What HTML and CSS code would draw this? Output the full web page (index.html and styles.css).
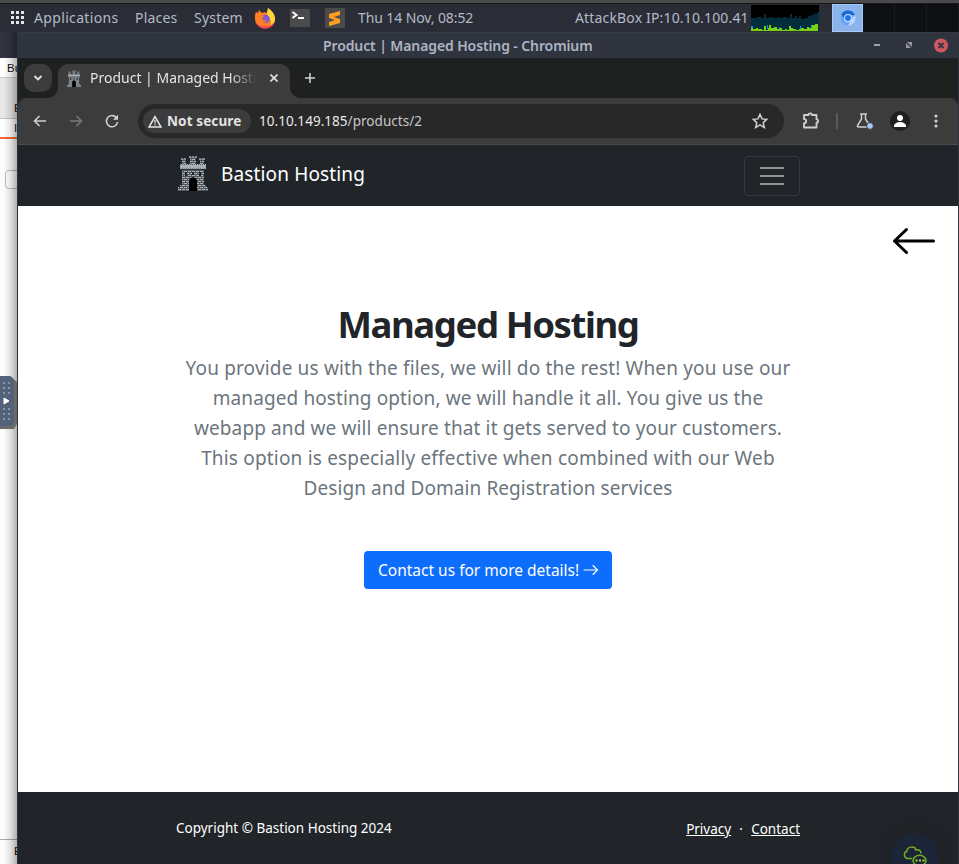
FILE: index.html
```html
<!DOCTYPE html>
<html lang="en">
<head>
<meta charset="utf-8">
<title>Product | Managed Hosting</title>
<link rel="stylesheet" href="styles.css">
</head>
<body>
<svg class="defs" width="0" height="0">
  <defs>
    <pattern id="brick" width="4" height="4" patternUnits="userSpaceOnUse">
      <rect width="4" height="4" fill="#a9b3b8"/>
      <path d="M0 3.5h4M0 1.5h4M1.5 0v1.5M3.5 1.5v2" stroke="#343b41" stroke-width=".75"/>
    </pattern>
    <symbol id="castle" viewBox="0 0 30 36">
      <path d="M3 3h2v1h1V3h2v2H3zM11 1h2v1h1V1h2v1h1V1h2v2h-8zM21 3h2v1h1V3h3v2h-6z" fill="#858b90"/>
      <path d="M4 5h4v5H4zM12 3h6v7h-6zM22 5h4v5h-4z" fill="url(#brick)"/>
      <path d="M2 9h26v5H2z" fill="#a7b0b6"/>
      <path d="M2 9.5h26M2 14h26" stroke="#515960" stroke-dasharray="1 1"/>
      <path d="M4 15h22v15H4z" fill="url(#brick)"/>
      <path d="M2 30h26v2H2zM0 32h30v4H0z" fill="url(#brick)"/>
      <path d="M11 36V26c0-5 8-5 8 0v10z" fill="#000"/>
      <path d="M7 17h2v4H7zM14 17h2v3h-2zM21 17h2v4h-2z" fill="#1d2126"/>
    </symbol>
  </defs>
</svg>
<div class="desktop">
  <header class="panel">
    <svg class="grid-icon" width="14" height="14" viewBox="0 0 14 14" fill="#e3e5e9"><path d="M0 0h3v3H0zM5 0h3v3H5zM10 0h3v3h-3zM0 5h3v3H0zM5 5h3v3H5zM10 5h3v3h-3zM0 10h3v3H0zM5 10h3v3H5zM10 10h3v3h-3z"/></svg>
    <span class="menu m-apps">Applications</span>
    <span class="menu m-places">Places</span>
    <span class="menu m-system">System</span>
    <svg class="launch" width="20" height="22" viewBox="0 0 20 22">
      <path d="M1 5l2 1 1-3 3 3c2-1 4-1 5 0l1-5c3 2 7 6 7 11a10 9.500 0 0 1-20 0c0-3 0-5 1-7z" fill="#ff8125"/>
      <path d="M12 6l1-5c4 3 7 6 7 11 0 3-2 7-5 8 2-5 1-8-2-10z" fill="#ffd43b"/>
      <path d="M1 14c1 5 5 7.500 9 7.500s8-2 9.500-7c-3 4-5 5-9 5S3 18 1 14z" fill="#ff3d59"/>
      <circle cx="10.500" cy="12" r="4.300" fill="#8058cf"/>
      <path d="M4 8l5 1-2 3c2 2 3 1 5 2-2 3-7 2-8-2z" fill="#ff7a22"/>
    </svg>
    <svg class="tile t-term" width="20" height="18" viewBox="0 0 20 18"><rect width="20" height="18" rx="1" fill="#4b4b4b"/><path d="M2.500 3l4 3-4 3" fill="none" stroke="#fff" stroke-width="2"/><path d="M8 9h6" stroke="#fff" stroke-width="2"/></svg>
    <svg class="tile t-subl" width="20" height="20" viewBox="0 0 20 20"><rect width="20" height="20" fill="#4b4b4b"/><path d="M4 6l11-3v4l-6 2 6 2v4L4 18v-4l6-2-6-2z" fill="#ff9c21"/></svg>
    <span class="menu m-date">Thu 14 Nov, 08:52</span>
    <span class="menu m-ip">AttackBox IP:10.10.100.41</span>
    <svg class="graph" width="68" height="26" viewBox="0 0 68 26" shape-rendering="crispEdges">
      <rect width="68" height="26" fill="#000"/>
      <path fill="#032d3b" d="M0 26V13h6v-1h4v1h3V9h2v4h3v-1h4v1h5v-1h2v1h3v-1h3v1h4V9h2v4h3v-2h2v2h2v-2h2v3h4v-1h3v-2h2v1h1v-2h3V8h1v1h2V7h2v1h2v18z"/>
      <path fill="#0499e5" d="M0 24v-3h2v3zM16 24v-4h1v4zM28 24v-2h1v2zM49 24v-3h1v3zM60 23v-3h2v3zM66 21v-2h1v2z"/>
      <path fill="#79cf12" d="M0 26v-3h2v1h3v-1h2v1h4v1h2v-4h2v4h2v-2h1v-3h2v3h3v-1h3v2h3v-1h2v2h3v-1h2v1h2v-4h2v2h2v1h3v1h3v-1h2v-1h3v1h3v-2h2v1h3v-3h3v-1h3v7z"/>
    </svg>
    <div class="task">
      <svg width="16" height="16" viewBox="0 0 16 16"><circle cx="8" cy="8" r="7.700" fill="#6aa4f7"/><path d="M1.300 4.200A7.700 7.700 0 0 1 15 5H8L5 10z" fill="#1967d2"/><path d="M15 5A7.700 7.700 0 0 1 8 15.700L11.500 9z" fill="#bcd5fc"/><circle cx="8" cy="8" r="3.900" fill="#d8e7ff"/><circle cx="8" cy="8" r="2.900" fill="#1a73e8"/></svg>
    </div>
    <div class="workspaces"><i></i><i></i><i></i></div>
  </header>
  <div class="stage">
    <aside class="behind">
      <div class="b-title"></div>
      <div class="b-menu">Bu</div>
      <div class="b-tabs"><span>E</span></div>
      <div class="b-sub"><span>I</span></div>
      <div class="b-body"><div class="b-field"></div></div>
      <div class="b-foot"><span>E</span></div>
      <div class="b-shadow"></div>
      <div class="handle"><svg width="17" height="54" viewBox="0 0 17 54"><path d="M0 0h10l7 6v42l-3 5H0z" fill="#6c6b6b"/><path d="M0 0h9q5 1 5 6v39q0 4-4 5H0z" fill="#536179"/><path d="M4 6v12M9 6v12M4 32v12M9 32v12" stroke="#8795aa" stroke-width="2" stroke-dasharray="2 3"/><path d="M4 22l5 3-5 3z" fill="#fff" stroke="#fff"/></svg></div>
    </aside>
    <div class="window">
      <div class="titlebar">
        <span class="w-title">Product | Managed Hosting - Chromium</span>
        <svg class="w-ctl" width="76" height="16" viewBox="0 0 76 16"><path d="M1 7h6" stroke="#9ea2aa" stroke-width="2"/><path d="M34 4h5v5zM33 5v5h5z" fill="#9598a0"/><circle cx="68" cy="7.500" r="7" fill="#cf5760"/><path d="M65.500 5l5 5M70.500 5l-5 5" stroke="#30343f" stroke-width="2"/></svg>
      </div>
      <div class="tabstrip">
        <div class="tab-search"><svg width="10" height="8" viewBox="0 0 10 8"><path d="M1.500 2L5 5.500 8.500 2" fill="none" stroke="#e3e3e3" stroke-width="1.800"/></svg></div>
        <div class="tab">
          <svg class="fav" width="14" height="17"><use href="#castle"/></svg>
          <span class="tab-title">Product | Managed Hosting</span>
          <svg width="8" height="8" viewBox="0 0 8 8"><path d="M.5.5l7 7M7.500.5l-7 7" stroke="#e3e3e3" stroke-width="1.600"/></svg>
        </div>
        <svg class="plus" width="10" height="10" viewBox="0 0 10 10"><path d="M5 0v10M0 5h10" stroke="#d6d6d6" stroke-width="1.500"/></svg>
      </div>
      <div class="toolbar">
        <svg class="nav back" width="14" height="12" viewBox="0 0 14 12"><path d="M13 6H2M6.500 1l-5 5 5 5" fill="none" stroke="#d0d0d0" stroke-width="1.600"/></svg>
        <svg class="nav fwd" width="14" height="12" viewBox="0 0 14 12"><path d="M1 6h11M7.500 1l5 5-5 5" fill="none" stroke="#797979" stroke-width="1.600"/></svg>
        <svg class="nav reload" width="14" height="14" viewBox="0 0 14 14"><path d="M12 4.500A5.600 5.600 0 1 0 12.600 8" fill="none" stroke="#d0d0d0" stroke-width="1.600"/><path d="M13 .8v5H8z" fill="#d0d0d0"/></svg>
        <div class="omnibox">
          <div class="chip"><svg width="14" height="13" viewBox="0 0 14 13"><path d="M7 1.600L13 12H1z" fill="none" stroke="#e3e3e3" stroke-width="1.600"/><path d="M7 5v3.500M7 9.300v1.300" stroke="#e3e3e3" stroke-width="1.300"/></svg><span class="chip-text">Not secure</span></div>
          <span class="url"><b>10.10.149.185</b>/products/2</span>
          <svg class="star" width="16" height="16" viewBox="0 0 16 16"><path d="M8 1.300l2 4.600 4.900.4-3.700 3.300 1.100 4.900L8 11.900l-4.300 2.600 1.100-4.900L1.100 6.300 6 5.900z" fill="none" stroke="#cfcfcf" stroke-width="1.500"/></svg>
        </div>
        <svg class="ext" width="18" height="18" viewBox="0 0 18 18"><path d="M2 3h4.500C6.500.8 10 .8 10 3h4.500v4.300c2.200 0 2.200 3.400 0 3.400v4.800H2v-4.300c3-.2 3-3.800 0-4z" fill="none" stroke="#cfcfcf" stroke-width="1.800" stroke-linejoin="round"/></svg>
        <i class="sep"></i>
        <svg class="flask" width="18" height="18" viewBox="0 0 18 18"><path d="M4 2h7M5.500 2v5L1.500 13.500Q1 15 2.500 15h10Q14 15 13.500 13.500L9.500 7V2" fill="none" stroke="#cfcfcf" stroke-width="1.500"/><circle cx="14" cy="14" r="3.400" fill="#a8c7fa" stroke="#3c3c3c"/></svg>
        <svg class="avatar" width="20" height="20" viewBox="0 0 20 20"><circle cx="10" cy="10" r="10" fill="#1f2020"/><circle cx="10" cy="7" r="3" fill="#fff"/><path d="M4 16v-2q2-3 6-3t6 3v2z" fill="#fff"/></svg>
        <svg class="dots" width="4" height="14" viewBox="0 0 4 14" fill="#cfcfcf"><circle cx="2" cy="2" r="1.600"/><circle cx="2" cy="7" r="1.600"/><circle cx="2" cy="12" r="1.600"/></svg>
      </div>
      <nav class="navbar">
        <svg class="logo" width="30" height="36"><use href="#castle"/></svg>
        <span class="brand">Bastion Hosting</span>
        <button class="toggler" aria-label="Menu"><i></i><i></i><i></i></button>
      </nav>
      <main class="page">
        <svg class="page-back" width="44" height="28" viewBox="0 0 44 28"><path d="M41.500 14H2.500M14.500 2.500L2.500 14l12 11.500" fill="none" stroke="#000" stroke-width="3" stroke-linecap="round" stroke-linejoin="round"/></svg>
        <h1><span>Managed Hosting</span></h1>
        <p class="lead">
          <span class="l1">You provide us with the files, we will do the rest! When you use our</span>
          <span class="l2">managed hosting option, we will handle it all. You give us the</span>
          <span class="l3">webapp and we will ensure that it gets served to your customers.</span>
          <span class="l4">This option is especially effective when combined with our Web</span>
          <span class="l5">Design and Domain Registration services</span>
        </p>
        <a class="cta"><span>Contact us for more details!</span><svg width="16" height="12" viewBox="0 0 16 12"><path d="M1 6h13M10 1.500L14.500 6 10 10.500" fill="none" stroke="#fff" stroke-width="1.100" stroke-linecap="round"/></svg></a>
      </main>
      <footer class="footer">
        <span class="copy">Copyright © Bastion Hosting 2024</span>
        <span class="links"><a class="f1">Privacy</a><span class="mid">·</span><a class="f2">Contact</a></span>
        <div class="chat"><svg width="26" height="22" viewBox="0 0 26 22" fill="none" stroke="#71ab20" stroke-width="1.500"><path d="M10 12.500H5a4 4 0 0 1 0-7.500C5 0 13 0 14 4c3-1 5 1 5 3.500"/><ellipse cx="17.500" cy="14.500" rx="6.500" ry="5.200"/><path d="M13.500 14.500h9" stroke="#a4d91e" stroke-width="2" stroke-dasharray="2 1.500"/></svg></div>
      </footer>
    </div>
  </div>
</div>
</body>
</html>
```

FILE: styles.css
```css
* { box-sizing: border-box; }
body { margin: 0; font-family: "Noto Sans", "Open Sans", sans-serif; overflow: hidden; }
svg { display: block; flex: none; }
.defs { position: absolute; }
.desktop { width: 959px; height: 864px; display: flex; flex-direction: column; overflow: hidden; background: #2b2f3a; }

.panel { height: 32px; flex: none; display: flex; align-items: center; padding: 1px 0 0 11px; background: #2b2d36; border-top: 3px solid #4b4b4b; box-shadow: inset 0 1px #17181c; color: #b3bac8; font-size: 14px; white-space: nowrap; }
.grid-icon { margin-right: 9px; }
.panel .menu { flex: none; line-height: 20px; }
.m-apps { width: 101px; letter-spacing: .34px; }
.m-places { width: 59px; letter-spacing: .2px; }
.m-system { width: 61px; letter-spacing: .2px; }
.t-term { margin-left: 15px; }
.t-subl { margin-left: 15px; }
.m-date { margin-left: 13px; width: 217px; letter-spacing: -.1px; }
.m-ip { width: 176px; letter-spacing: .16px; }
.graph { margin-top: 0; }
.task { width: 31px; height: 28px; flex: none; margin-left: 13px; background: #8ab4eb; border: 1px solid #a9caf5; display: flex; align-items: center; justify-content: center; }
.workspaces { flex: 1; height: 28px; display: flex; background: #0d0f12; }
.workspaces i { width: 32px; border-right: 1px solid #191b1f; }

.stage { flex: 1; min-height: 0; display: flex; }
.behind { width: 17px; flex: none; position: relative; display: flex; flex-direction: column; background: #fcfcfc; overflow: hidden; font: 11.500px/12px "Liberation Sans", sans-serif; color: #111; }
.b-title { height: 26px; background: #2f3440; flex: none; }
.b-menu { height: 20px; padding: 4px 0 0 7px; background: #fff; border-bottom: 1px solid #c9c9c9; }
.b-tabs { height: 41px; padding: 24px 0 0 14px; background: #e7e7e7; border-bottom: 1px solid #bfc4c4; }
.b-sub { height: 20px; padding: 3px 0 0 14px; background: #fff; border-bottom: 2px solid #ff6633; }
.b-body { flex: 1; padding: 31px 0 0 5px; }
.b-field { width: 20px; height: 19px; border: 1px solid #bdbdbd; border-radius: 4px; background: #fff; }
.b-foot { height: 25px; padding: 5px 0 0 14px; border-top: 1px solid #a9a9a9; }
.b-shadow { position: absolute; inset: 0; background: linear-gradient(90deg, transparent 20%, rgba(0,0,0,.1) 60%, rgba(0,0,0,.3)); }
.handle { position: absolute; left: 0; top: 344px; }

.window { width: 942px; flex: none; border-left: 1px solid #2e323c; border-right: 1px solid #2e3440; display: flex; flex-direction: column; }
.titlebar { height: 26px; flex: none; background: #30343f; border-top: 1px solid #363a46; display: flex; align-items: center; color: #adb5c4; font-size: 14px; font-weight: 600; white-space: nowrap; }
.w-title { margin-left: 305px; width: 550px; line-height: 20px; letter-spacing: -.11px; }
.tabstrip { height: 40px; flex: none; background: #1f2120; display: flex; align-items: flex-start; padding: 6px 0 0 6px; }
.tab-search { width: 28px; height: 28px; border-radius: 10px; background: #3c3c3c; display: flex; align-items: center; justify-content: center; }
.tab { position: relative; margin-left: 6px; width: 232px; height: 34px; border-radius: 10px 10px 0 0; background: #3c3c3c; display: flex; align-items: center; padding: 0 0 6px 9px; }
.tab::before, .tab::after { content: ""; position: absolute; bottom: 0; width: 10px; height: 10px; }
.tab::before { left: -10px; background: radial-gradient(circle at 0 0, transparent 9.5px, #3c3c3c 10px); }
.tab::after { right: -10px; background: radial-gradient(circle at 100% 0, transparent 9.5px, #3c3c3c 10px); }
.tab-title { margin-left: 9px; width: 167px; margin-right: 13px; overflow: hidden; white-space: nowrap; font-size: 14px; line-height: 20px; color: #e3e3e3; -webkit-mask-image: linear-gradient(90deg, #000 140px, transparent); mask-image: linear-gradient(90deg, #000 140px, transparent); }
.plus { margin: 9px 0 0 15px; }
.toolbar { height: 47px; flex: none; background: #3c3c3c; border-bottom: 1px solid #4a4a4a; border-radius: 8px 8px 0 0; outline: 8px solid #1f2120; outline-offset: 0; clip-path: inset(0); display: flex; align-items: center; padding-left: 15px; }
.fwd { margin-left: 22px; }
.reload { margin-left: 22px; }
.omnibox { width: 646px; height: 34px; margin-left: 19px; border-radius: 17px; background: #282828; display: flex; align-items: center; padding-left: 5px; font-size: 13.500px; color: #c7c7c7; white-space: nowrap; }
.chip { width: 108px; height: 24px; border-radius: 12px; background: #3c3c3c; color: #e3e3e3; display: flex; align-items: center; padding-left: 5px; gap: 5px; font-weight: 700; letter-spacing: .12px; }
.url { margin-left: 8px; width: 493px; letter-spacing: .04px; }
.url b { font-weight: 400; color: #e8e8e8; }
.ext { margin-left: 18px; }
.sep { width: 2px; height: 16px; background: #5b5b5b; margin-left: 16px; }
.flask { margin-left: 18px; }
.avatar { margin-left: 16px; }
.dots { margin-left: 24px; }

.navbar { height: 61px; flex: none; background: #212529; display: flex; align-items: center; padding: 0 158px 0 160px; color: #fff; }
.logo { margin-top: -5px; }
.brand { margin: -3px auto 0 13px; font-size: 19px; letter-spacing: .14px; white-space: nowrap; }
.toggler { width: 56px; height: 40px; background: none; border: 1px solid #383b3f; border-radius: 5px; padding: 0; display: flex; flex-direction: column; align-items: center; justify-content: center; gap: 6px; }
.toggler i { width: 24px; height: 2px; background: #909294; }

.page { flex: 1; position: relative; background: #fff; display: flex; flex-direction: column; align-items: center; text-align: center; padding-top: 94px; }
.page-back { position: absolute; left: 874px; top: 20.500px; }
h1 { margin: 0; font-size: 36.500px; line-height: 48px; font-weight: 700; letter-spacing: -1.4px; color: #212529; white-space: nowrap; }
.lead { margin: 5px 0 0; font-size: 19px; line-height: 30px; color: #6c757d; white-space: nowrap; }
.lead span { display: block; }
.l1 { letter-spacing: .165px; }
.l2 { letter-spacing: .1px; }
.l3 { letter-spacing: .12px; }
.l4 { letter-spacing: .18px; }
.l5 { letter-spacing: .08px; }
.cta { margin-top: 48px; width: 248px; height: 38px; border-radius: 4px; background: #0d6efd; color: #fff; font-size: 15.500px; display: flex; align-items: center; padding-left: 14px; gap: 4px; white-space: nowrap; }
.footer { height: 72px; flex: none; position: relative; background: #212529; color: #fff; display: flex; justify-content: space-between; padding: 26px 158px 0; font-size: 13.500px; line-height: 20px; white-space: nowrap; overflow: hidden; }
.links { display: flex; margin-top: 1px; }
.links a { text-decoration: underline; }
.mid { width: 20px; text-align: center; }
.chat { position: absolute; left: 873px; top: 41px; width: 48px; height: 48px; border-radius: 50%; background: #1c2538; box-shadow: 0 0 20px rgba(0,0,0,.15); padding: 13px 0 0 11px; }
```
